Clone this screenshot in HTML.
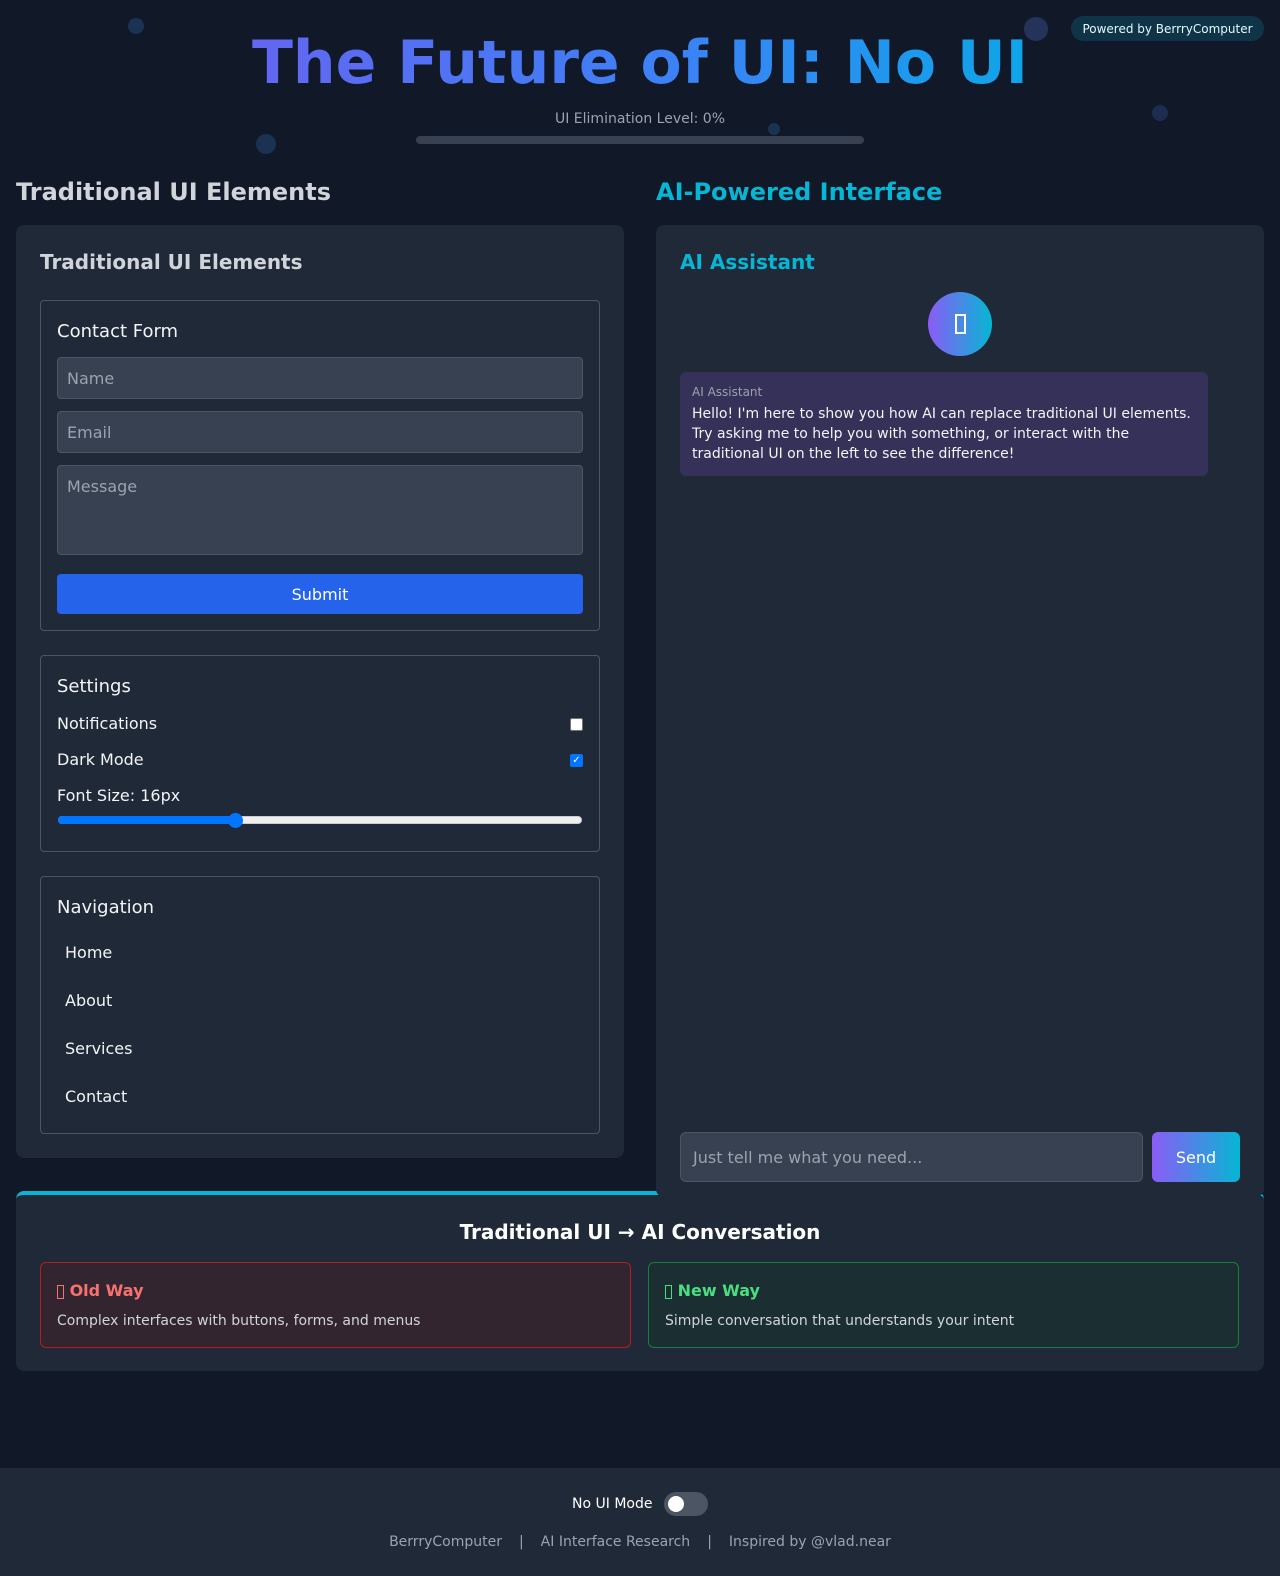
<!DOCTYPE html>
<html><head><meta charset="utf-8"><style>
*{box-sizing:border-box;margin:0;padding:0}
body{width:1280px;height:1576px;background:#111827;font-family:"DejaVu Sans","Liberation Sans",sans-serif;color:#f3f4f6;position:relative;overflow:hidden}
.a{position:absolute}
.dot{position:absolute;border-radius:50%;background:#1e3a5f;opacity:.8}
.c{display:flex;align-items:center}
.panel{background:#1f2937;border-radius:8px}
.fs{position:absolute;border:1px solid #4b5563;border-radius:4px}
.inp{position:absolute;background:#374151;border:1px solid #4b5563;border-radius:4px;color:#9ca3af;font-size:16px;padding-left:9px}
.tofu{display:inline-block;border:1px solid currentColor;vertical-align:middle}
.sep{margin:0 17px}
</style></head><body>
<div class="dot" style="left:128px;top:18px;width:16px;height:16px"></div>
<div class="dot" style="left:1024px;top:17px;width:24px;height:24px;background:#2a3a66"></div>
<div class="dot" style="left:256px;top:134px;width:20px;height:20px"></div>
<div class="dot" style="left:768px;top:123px;width:12px;height:12px"></div>
<div class="dot" style="left:1152px;top:105px;width:16px;height:16px;background:#22335a"></div>

<div class="a c" style="left:1071px;top:16px;width:193px;height:25px;background:#0f3447;border-radius:13px;justify-content:center;font-size:12px;color:#e5f6ff">Powered by BerrryComputer</div>

<div class="a" style="left:0;top:28px;width:1280px;text-align:center;font-size:60px;font-weight:bold;line-height:70px"><span style="background:linear-gradient(90deg,#6366f1,#3b82f6 55%,#0ea5e9);-webkit-background-clip:text;background-clip:text;color:transparent">The Future of UI: No UI</span></div>
<div class="a" style="left:0;top:111px;width:1280px;text-align:center;font-size:14px;color:#9ca3af">UI Elimination Level: 0%</div>
<div class="a" style="left:416px;top:136px;width:448px;height:8px;background:#374151;border-radius:4px"></div>

<div class="a" style="left:16px;top:178px;font-size:24px;font-weight:bold;color:#d1d5db">Traditional UI Elements</div>
<div class="a" style="left:656px;top:178px;font-size:24px;font-weight:bold;color:#06b6d4">AI-Powered Interface</div>

<div class="a panel" style="left:16px;top:225px;width:608px;height:933px"></div>
<div class="a" style="left:40px;top:250px;font-size:20px;font-weight:bold;color:#d1d5db">Traditional UI Elements</div>

<div class="fs" style="left:40px;top:300px;width:560px;height:331px"></div>
<div class="a" style="left:57px;top:321px;font-size:18px">Contact Form</div>
<div class="inp c" style="left:57px;top:357px;width:526px;height:42px">Name</div>
<div class="inp c" style="left:57px;top:411px;width:526px;height:42px">Email</div>
<div class="inp" style="left:57px;top:465px;width:526px;height:90px;padding-top:11px">Message</div>
<div class="a c" style="left:57px;top:574px;width:526px;height:40px;background:#2563eb;border-radius:4px;justify-content:center;font-size:16px;color:#fff">Submit</div>

<div class="fs" style="left:40px;top:655px;width:560px;height:197px"></div>
<div class="a" style="left:57px;top:676px;font-size:18px">Settings</div>
<div class="a" style="left:57px;top:714px;font-size:16px">Notifications</div>
<div class="a" style="left:570px;top:718px;width:13px;height:13px;background:#fff;border:1px solid #767676;border-radius:2px"></div>
<div class="a" style="left:57px;top:750px;font-size:16px">Dark Mode</div>
<div class="a c" style="left:570px;top:754px;width:13px;height:13px;background:#0075ff;border-radius:2px;justify-content:center;color:#fff;font-size:10px">✓</div>
<div class="a" style="left:57px;top:786px;font-size:16px">Font Size: 16px</div>
<div class="a" style="left:58px;top:816px;width:524px;height:8px;background:#efefef;border:1px solid #ccc;border-radius:4px"></div>
<div class="a" style="left:58px;top:816px;width:178px;height:8px;background:#0075ff;border-radius:4px"></div>
<div class="a" style="left:228px;top:813px;width:15px;height:15px;background:#0075ff;border-radius:50%"></div>

<div class="fs" style="left:40px;top:876px;width:560px;height:258px"></div>
<div class="a" style="left:57px;top:897px;font-size:18px">Navigation</div>
<div class="a" style="left:65px;top:943px;font-size:16px">Home</div>
<div class="a" style="left:65px;top:991px;font-size:16px">About</div>
<div class="a" style="left:65px;top:1039px;font-size:16px">Services</div>
<div class="a" style="left:65px;top:1087px;font-size:16px">Contact</div>

<div class="a panel" style="left:16px;top:1191px;width:1248px;height:180px;border-top:4px solid #06b6d4"></div>
<div class="a panel" style="left:656px;top:225px;width:608px;height:972px"></div>
<div class="a" style="left:680px;top:250px;font-size:20px;font-weight:bold;color:#06b6d4">AI Assistant</div>
<div class="a c" style="left:928px;top:292px;width:64px;height:64px;border-radius:50%;background:linear-gradient(90deg,#8b5cf6,#06b6d4);justify-content:center;color:#fff"><span class="tofu" style="width:11px;height:20px;border-width:2px"></span></div>
<div class="a" style="left:680px;top:372px;width:528px;height:104px;background:#353159;border-radius:6px;padding:13px 12px 0"><div style="font-size:12px;color:#9ca3af;margin-bottom:5px">AI Assistant</div><div style="font-size:14px;line-height:20px;color:#f3f4f6">Hello! I'm here to show you how AI can replace traditional UI elements. Try asking me to help you with something, or interact with the traditional UI on the left to see the difference!</div></div>
<div class="inp c" style="left:680px;top:1132px;width:463px;height:50px;border-radius:6px;padding-left:12px;font-size:16px">Just tell me what you need...</div>
<div class="a c" style="left:1152px;top:1132px;width:88px;height:50px;border-radius:6px;background:linear-gradient(90deg,#8b5cf6,#06b6d4);justify-content:center;font-size:16px;color:#fff">Send</div>

<div class="a" style="left:0;top:1220px;width:1280px;text-align:center;font-size:20px;font-weight:bold;color:#fff">Traditional UI → AI Conversation</div>
<div class="a" style="left:40px;top:1262px;width:591px;height:86px;background:#33252f;border:1px solid #b91c1c;border-radius:6px;padding:18px 16px"><div style="font-size:16px;font-weight:bold;color:#f87171"><span class="tofu" style="width:7px;height:14px"></span> Old Way</div><div style="font-size:14px;color:#d1d5db;margin-top:13px">Complex interfaces with buttons, forms, and menus</div></div>
<div class="a" style="left:648px;top:1262px;width:591px;height:86px;background:#1b2e31;border:1px solid #15803d;border-radius:6px;padding:18px 16px"><div style="font-size:16px;font-weight:bold;color:#4ade80"><span class="tofu" style="width:7px;height:14px"></span> New Way</div><div style="font-size:14px;color:#d1d5db;margin-top:13px">Simple conversation that understands your intent</div></div>

<div class="a" style="left:0;top:1468px;width:1280px;height:108px;background:#1f2937"></div>
<div class="a" style="left:572px;top:1496px;font-size:14px;color:#fff">No UI Mode</div>
<div class="a" style="left:664px;top:1492px;width:44px;height:24px;background:#4b5563;border-radius:12px"></div>
<div class="a" style="left:668px;top:1496px;width:16px;height:16px;background:#fff;border-radius:50%"></div>
<div class="a" style="left:0;top:1534px;width:1280px;text-align:center;font-size:14px;color:#9ca3af;white-space:pre">BerrryComputer<span class="sep">|</span>AI Interface Research<span class="sep">|</span>Inspired by @vlad.near</div>
</body></html>
